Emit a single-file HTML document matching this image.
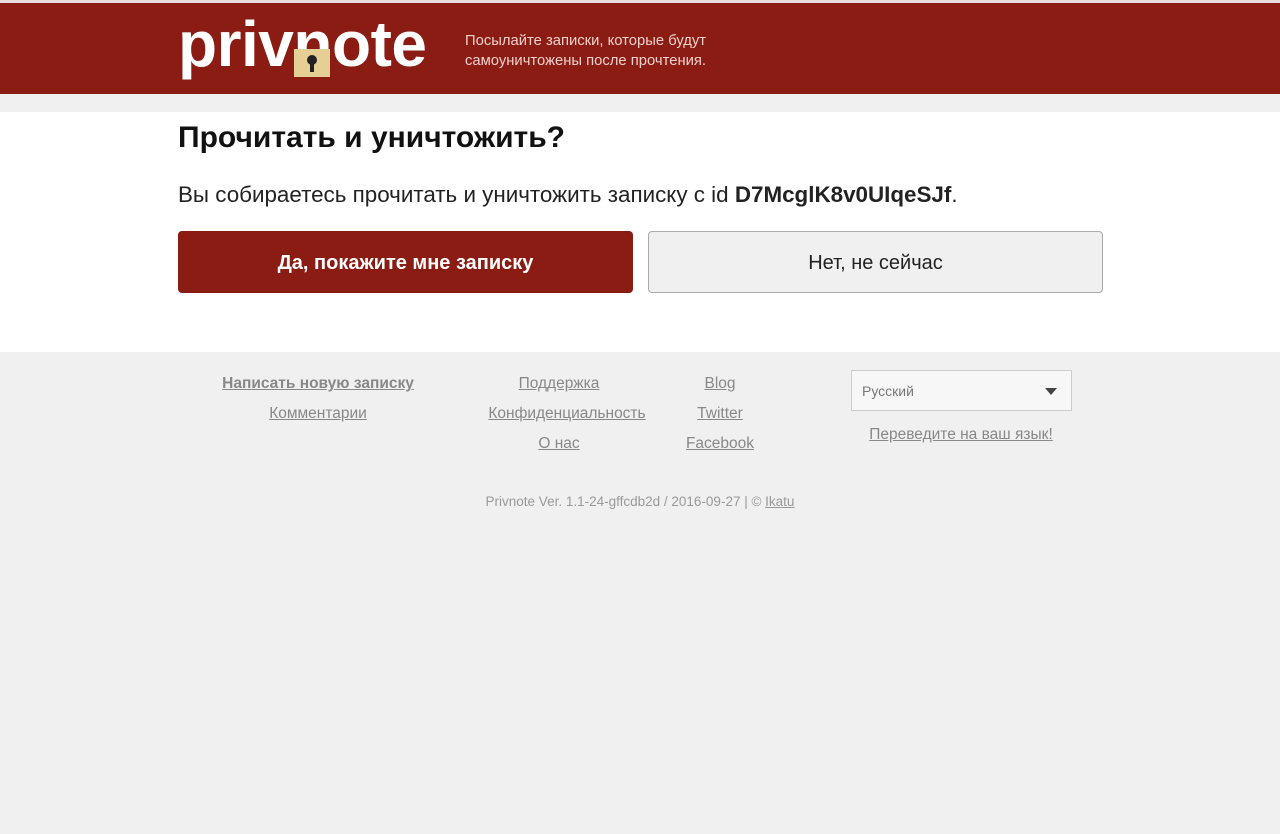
<!DOCTYPE html>
<html><head><meta charset="utf-8"><style>
body{margin:0;background:#f0f0f0;font-family:"Liberation Sans",Arial,sans-serif;width:1280px;height:834px;overflow:hidden;position:relative}
.top{position:absolute;top:0;left:0;width:1280px;height:3px;background:#e8dcdc}
.hdr{position:absolute;top:3px;left:0;width:1280px;height:91px;background:#8b1c13}
.logo{position:absolute;left:178px;top:4px;font-size:64px;font-weight:bold;color:#fff;letter-spacing:-0.5px}
.lock{position:absolute;left:294px;top:46px;width:36px;height:28px;background:#e6cf95}
.lock .h{position:absolute;left:13px;top:6px;width:10px;height:10px;border-radius:50%;background:#222}
.lock .s{position:absolute;left:16px;top:12px;width:4px;height:11px;background:#222}
.tag{position:absolute;left:465px;top:28px;color:#f0d0cc;font-size:14.8px;line-height:20px}
.main{position:absolute;top:112px;left:0;width:1280px;height:240px;background:#fff}
h1{position:absolute;left:178px;top:9px;margin:0;font-size:30px;color:#111}
.p{position:absolute;left:178px;top:70px;font-size:22.4px;color:#222}
.b1,.b2{position:absolute;top:119px;width:455px;height:62px;box-sizing:border-box;border-radius:4px;display:flex;align-items:center;justify-content:center;font-size:20px;padding-top:3px}
.b1{left:178px;background:#8b1c13;color:#fff;font-weight:bold}
.b2{left:648px;background:#f0f0f0;border:1px solid #aaa;color:#222}
.f a{position:absolute;color:#888;font-size:15.5px;text-decoration:underline;white-space:nowrap;transform:translateX(-50%)}
.sel{position:absolute;left:851px;top:370px;width:221px;height:41px;box-sizing:border-box;border:1px solid #ccc;background:#f7f7f7;font-size:14px;color:#777;padding:12px 10px}
.sel:after{content:"";position:absolute;right:14px;top:17px;border:6px solid transparent;border-top:7px solid #444}
.ver{position:absolute;left:0;width:1280px;text-align:center;top:494px;font-size:13.5px;color:#999}
</style></head><body>
<div class="top"></div>
<div class="hdr">
<div class="logo">privnote</div>
<div class="lock"><div class="h"></div><div class="s"></div></div>
<div class="tag">Посылайте записки, которые будут<br>самоуничтожены после прочтения.</div>
</div>
<div class="main">
<h1>Прочитать и уничтожить?</h1>
<div class="p">Вы собираетесь прочитать и уничтожить записку с id <b>D7McglK8v0UIqeSJf</b>.</div>
<div class="b1">Да, покажите мне записку</div>
<div class="b2">Нет, не сейчас</div>
</div>
<div class="f">
<a style="left:318px;top:375px;font-weight:bold">Написать новую записку</a>
<a style="left:318px;top:405px">Комментарии</a>
<a style="left:559px;top:375px">Поддержка</a>
<a style="left:567px;top:405px">Конфиденциальность</a>
<a style="left:559px;top:435px">О нас</a>
<a style="left:720px;top:375px">Blog</a>
<a style="left:720px;top:405px">Twitter</a>
<a style="left:720px;top:435px">Facebook</a>
<a style="left:961px;top:426px">Переведите на ваш язык!</a>
</div>
<div class="sel">Русский</div>
<div class="ver">Privnote Ver. 1.1-24-gffcdb2d / 2016-09-27 | © <u>Ikatu</u></div>
</body></html>
